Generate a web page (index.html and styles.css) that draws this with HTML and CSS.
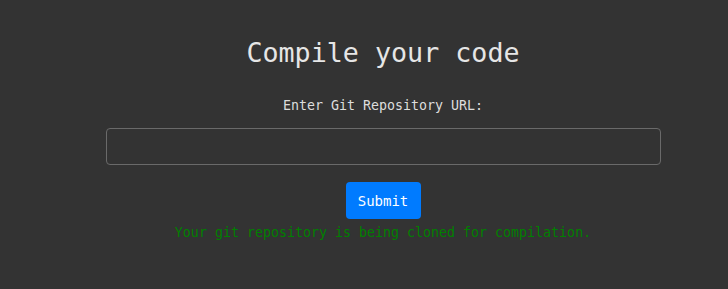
FILE: index.html
```html
<!DOCTYPE html>
<html lang="en">
<head>
<meta charset="UTF-8">
<meta name="viewport" content="width=device-width, initial-scale=1.0">
<title>Compile your code</title>
<link rel="stylesheet" href="styles.css">
</head>
<body>
<div class="container">
    <h1>Compile your code</h1>
    <form id="repoForm">
        <label for="repoUrl">Enter Git Repository URL:</label>
        <input type="text" id="repoUrl" name="repoUrl">
        <button type="submit">Submit</button>
    </form>
    <div id="status">Your git repository is being cloned for compilation.</div>
</div>
</body>
</html>
```

FILE: styles.css
```css
body {
    margin: 0;
    padding: 0;
    background-color: #333333;
    font-family: "DejaVu Sans Mono", monospace;
    color: #dddddd;
}
.container {
    width: 556px;
    margin-left: 105px;
    padding-top: 37px;
    display: flex;
    flex-direction: column;
    align-items: center;
    text-align: center;
}
h1 {
    margin: 0;
    font-size: 26.7px;
    font-weight: normal;
    color: #e6e6e6;
    line-height: 31px;
}
form {
    width: 100%;
    display: flex;
    flex-direction: column;
    align-items: center;
}
label {
    margin-top: 30px;
    font-size: 13.3px;
    line-height: 16px;
}
input[type="text"] {
    box-sizing: border-box;
    width: 555px;
    height: 37px;
    margin-top: 14px;
    background-color: #333333;
    border: 1px solid #6a6a6a;
    border-radius: 4px;
    color: #dddddd;
    font-family: inherit;
}
button {
    margin-top: 17px;
    width: 75px;
    height: 37px;
    font-family: inherit;
    font-size: 14px;
    color: #fff;
    background-color: #007bff;
    border: none;
    border-radius: 4px;
    cursor: pointer;
}
#status {
    margin-top: 6px;
    font-size: 13.3px;
    line-height: 16px;
    color: #008000;
}
```
